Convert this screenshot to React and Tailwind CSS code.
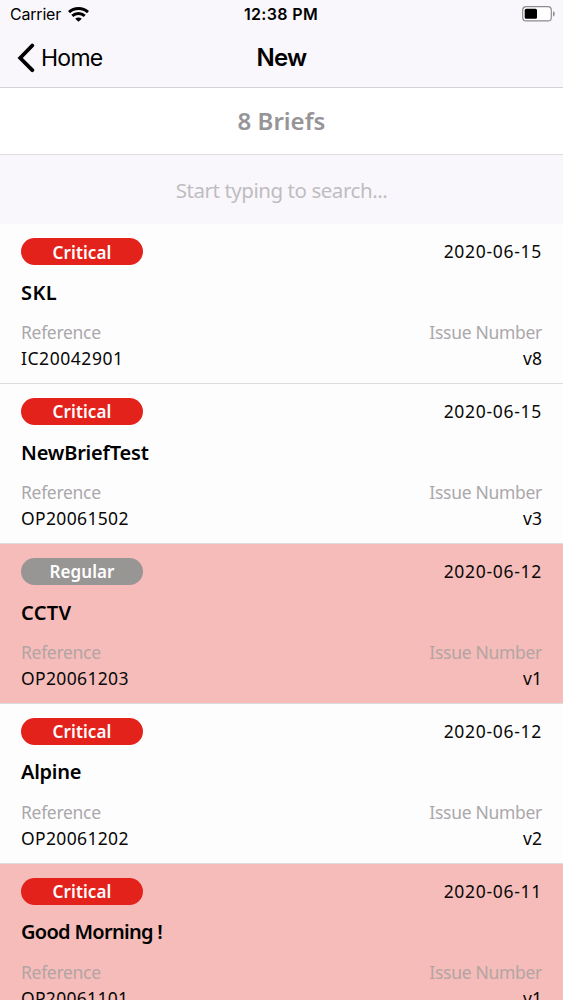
import React from 'react';

const briefs = [
  { level: 'Critical', date: '2020-06-15', title: 'SKL', titleStyle: 'tracking-[0.4px]', reference: 'IC20042901', referenceStyle: 'tracking-[0.55px]', issue: 'v8' },
  { level: 'Critical', date: '2020-06-15', title: 'NewBriefTest', titleStyle: 'tracking-[-0.2px]', reference: 'OP20061502', referenceStyle: 'tracking-[0.35px]', issue: 'v3' },
  { level: 'Regular', date: '2020-06-12', title: 'CCTV', titleStyle: 'tracking-[0.3px]', reference: 'OP20061203', referenceStyle: 'tracking-[0.35px]', issue: 'v1', highlighted: true },
  { level: 'Critical', date: '2020-06-12', title: 'Alpine', titleStyle: 'tracking-[-0.25px]', reference: 'OP20061202', referenceStyle: 'tracking-[0.35px]', issue: 'v2' },
  { level: 'Critical', date: '2020-06-11', title: 'Good Morning !', titleStyle: 'tracking-[-0.7px]', reference: 'OP20061101', referenceStyle: 'tracking-[0.3px]', issue: 'v1', highlighted: true },
];

function StatusBar() {
  return (
    <div className="grid h-[28px] grid-cols-[1fr_auto_1fr] items-center pl-[10px] pr-[7px] text-[16px] leading-[28px]">
      <div className="flex items-center gap-[7px]">
        <span className="tracking-[-0.2px]">Carrier</span>
        <svg width="21" height="15" viewBox="0 0 21 15" fill="none" stroke="#000" strokeWidth="3">
          <path d="M1 5.2C6.3 .3 14.7 .3 20 5.2" />
          <path d="M4.3 8.9C7.8 5.8 13.2 5.8 16.7 8.9" />
          <path d="M7.2 11.7C9.1 10.2 11.9 10.2 13.8 11.7L10.5 14.8Z" fill="#000" stroke="none" />
        </svg>
      </div>
      <span className="-ml-[2px] mr-[2px] text-center font-semibold tracking-[0.35px]">12:38 PM</span>
      <svg className="mt-[-1px] justify-self-end" width="34" height="16" viewBox="0 0 34 16">
        <rect x=".7" y=".7" width="28.6" height="14.2" rx="3.5" fill="#fff" stroke="#8d8b90" strokeWidth="1.2" />
        <rect x="2.7" y="2.8" width="12.3" height="10" rx="1.5" fill="#000" />
        <path d="M31 5.2c2.3.8 2.3 4.5 0 5.3Z" fill="#8d8b90" />
      </svg>
    </div>
  );
}

function Navigation() {
  return (
    <div className="grid h-[59px] grid-cols-3 items-center px-[17px]">
      <div className="flex items-center gap-[6px]">
        <svg width="18" height="30" viewBox="0 0 18 30" fill="none" stroke="#000" strokeWidth="3.8" strokeLinecap="round" strokeLinejoin="miter">
          <path d="M15.3 2.5L3.2 15L15.3 27.2" />
        </svg>
        <span className="pt-px text-[23px] tracking-[-0.75px]">Home</span>
      </div>
      <h1 className="text-center text-[24px] font-semibold tracking-[-0.7px]">New</h1>
    </div>
  );
}

function Brief({ brief }) {
  const labelColor = brief.highlighted ? 'text-[#b2a5a3]' : 'text-[#aaa8ab]';
  return (
    <article className={`h-[159.8px] shrink-0 border-b border-[#dedce0] px-[21px] pt-[14px] ${brief.highlighted ? 'bg-[#f6bcba]' : 'bg-[#fefdfe]'}`}>
      <div className="flex h-[28px] items-start justify-between">
        <span className={`flex h-[27px] w-[122px] items-center justify-center rounded-full pt-px text-[17px] font-semibold tracking-[0.1px] text-white ${brief.level === 'Regular' ? 'bg-[#979695]' : 'bg-[#e3231b]'}`}>
          {brief.level}
        </span>
        <span className="text-[17.5px] leading-[27.4px] tracking-[0.7px]">{brief.date}</span>
      </div>
      <h2 className={`mt-[12.6px] h-[28px] text-[20px] font-semibold leading-[28px] text-black ${brief.titleStyle}`}>{brief.title}</h2>
      <div className="mt-[12.4px] flex justify-between text-[17.5px] leading-[26px]">
        <div>
          <p className={`tracking-[-0.3px] ${labelColor}`}>Reference</p>
          <p className={brief.referenceStyle}>{brief.reference}</p>
        </div>
        <div className="text-right">
          <p className={`tracking-[-0.3px] ${labelColor}`}>Issue Number</p>
          <p>{brief.issue}</p>
        </div>
      </div>
    </article>
  );
}

export default function App() {
  return (
    <main className="flex h-screen w-full flex-col overflow-hidden bg-[#f9f7fb] font-['Noto_Sans',sans-serif] text-[#080808]">
      <header className="h-[88px] shrink-0 border-b border-[#d5d3d7] font-['Inter',sans-serif] text-black">
        <StatusBar />
        <Navigation />
      </header>
      <div className="flex h-[67px] shrink-0 items-center justify-center border-b border-[#dedce0] bg-white text-[24px] font-semibold text-[#969497]">8 Briefs</div>
      <label className="h-[69.4px] shrink-0">
        <input className="h-full w-full bg-transparent text-center text-[20.5px] tracking-[-0.45px] outline-none placeholder:text-[#bfbdc1]" placeholder="Start typing to search..." />
      </label>
      {briefs.map((brief) => <Brief key={brief.title} brief={brief} />)}
    </main>
  );
}
